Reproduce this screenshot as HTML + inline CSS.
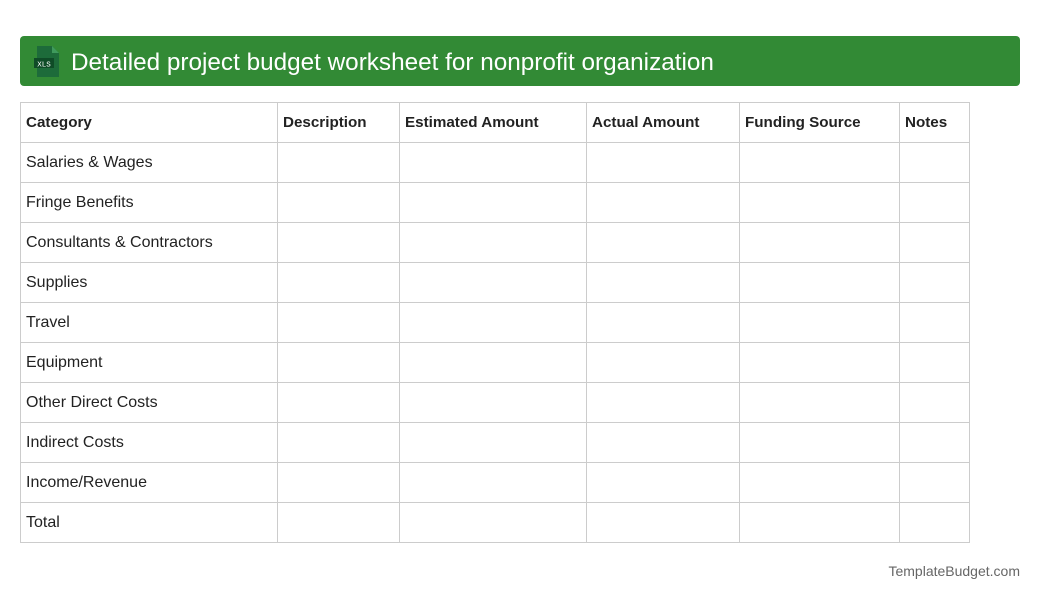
<!DOCTYPE html><html><head><style>
body{margin:0;background:#fff;font-family:"Liberation Sans",sans-serif;width:1040px;height:600px;position:relative;overflow:hidden}
.hd{position:absolute;left:20px;top:36px;width:1000px;height:50px;background:#328a35;border-radius:4px}
.hd h1{position:absolute;left:51px;top:1px;margin:0;line-height:51px;font-size:24.3px;font-weight:normal;color:#fff}
table{position:absolute;left:20px;top:102px;border-collapse:collapse;font-size:16px;color:#222}
td{border:1px solid #ccc;height:40px;padding:0 0 0 5px;box-sizing:border-box}
tr:first-child td{font-weight:bold;font-size:15.2px}
.ft{position:absolute;right:20px;top:563px;font-size:14px;color:#666}
</style></head><body>
<div class="hd">
<svg style="position:absolute;left:14px;top:10px" width="26" height="31" viewBox="0 0 26 31"><path d="M3 0h15l7 7v24H3z" fill="#1d6b3a"/><path d="M18 0v7h7z" fill="#3f9a5c"/><rect x="0" y="12" width="20" height="10" fill="#0f4b27"/><text x="10" y="20.5" font-size="7.5" fill="#fff" text-anchor="middle" font-family="Liberation Mono">XLS</text></svg>
<h1>Detailed project budget worksheet for nonprofit organization</h1></div>
<table>
<colgroup><col style="width:257px"><col style="width:122px"><col style="width:187px"><col style="width:153px"><col style="width:160px"><col style="width:70px"></colgroup>
<tr><td>Category</td><td>Description</td><td>Estimated Amount</td><td>Actual Amount</td><td>Funding Source</td><td>Notes</td></tr>
<tr><td>Salaries &amp; Wages</td><td></td><td></td><td></td><td></td><td></td></tr>
<tr><td>Fringe Benefits</td><td></td><td></td><td></td><td></td><td></td></tr>
<tr><td>Consultants &amp; Contractors</td><td></td><td></td><td></td><td></td><td></td></tr>
<tr><td>Supplies</td><td></td><td></td><td></td><td></td><td></td></tr>
<tr><td>Travel</td><td></td><td></td><td></td><td></td><td></td></tr>
<tr><td>Equipment</td><td></td><td></td><td></td><td></td><td></td></tr>
<tr><td>Other Direct Costs</td><td></td><td></td><td></td><td></td><td></td></tr>
<tr><td>Indirect Costs</td><td></td><td></td><td></td><td></td><td></td></tr>
<tr><td>Income/Revenue</td><td></td><td></td><td></td><td></td><td></td></tr>
<tr><td>Total</td><td></td><td></td><td></td><td></td><td></td></tr>
</table>
<div class="ft">TemplateBudget.com</div>
</body></html>
